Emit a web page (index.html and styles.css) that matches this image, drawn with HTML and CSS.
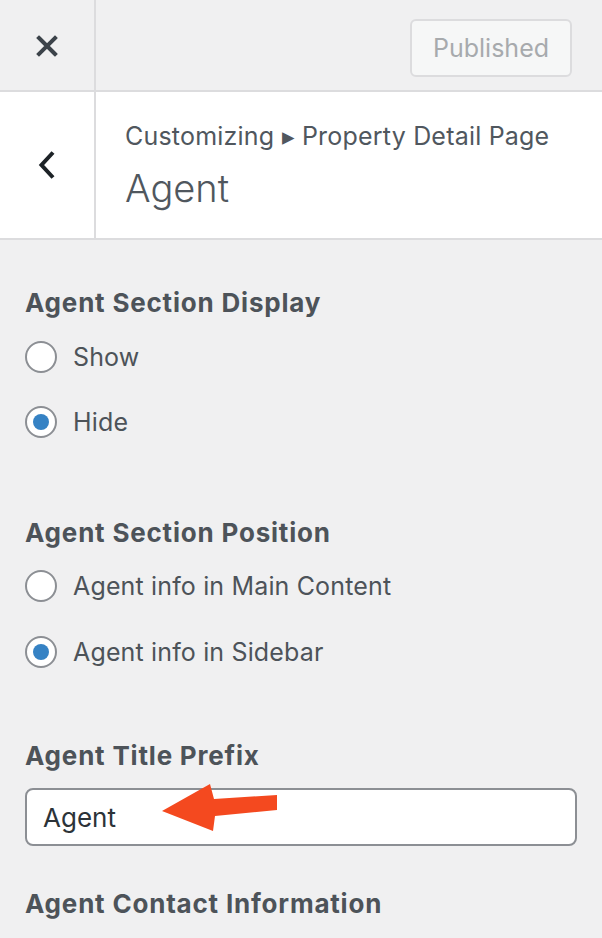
FILE: index.html
```html
<!DOCTYPE html>
<html lang="en">
  <head>
    <meta charset="UTF-8" />
    <meta name="viewport" content="width=device-width, initial-scale=1.0" />
    <title>Customizing Agent</title>
    <link rel="stylesheet" href="styles.css">
  </head>
  <body>
    <div class="topbar">
      <button class="close" aria-label="Close">
        <svg width="22" height="22" viewBox="0 0 22 22">
          <path d="M3 3 L19 19 M19 3 L3 19" stroke="#3c434a" stroke-width="4" stroke-linecap="square" fill="none" />
        </svg>
      </button>
      <button class="published" disabled>Published</button>
    </div>

    <div class="section-header">
      <button class="back" aria-label="Back">
        <svg width="18" height="30" viewBox="0 0 18 30">
          <path d="M15 2.5 L3.5 15 L15 27.5" stroke="#1d2327" stroke-width="4" fill="none" />
        </svg>
      </button>
      <div class="titles">
        <span class="crumb">Customizing &#9656; Property Detail Page</span>
        <h2>Agent</h2>
      </div>
    </div>

    <ul class="controls">
      <li class="control group-display">
        <span class="control-title">Agent Section Display</span>
        <label class="radio"><input type="radio" name="display" /> Show</label>
        <label class="radio"><input type="radio" name="display" checked /> Hide</label>
      </li>
      <li class="control group-position">
        <span class="control-title">Agent Section Position</span>
        <label class="radio"><input type="radio" name="position" /> Agent info in Main Content</label>
        <label class="radio"><input type="radio" name="position" checked /> Agent info in Sidebar</label>
      </li>
      <li class="control group-prefix">
        <span class="control-title">Agent Title Prefix</span>
        <div class="field">
          <input type="text" value="Agent" />
          <svg class="arrow" width="260" height="50" viewBox="0 0 260 50">
            <polygon points="137,23 185,-4 189,11 252,7 252,22 190,28 188,43" fill="#f4491f" />
          </svg>
        </div>
      </li>
      <li class="control group-contact">
        <span class="control-title">Agent Contact Information</span>
      </li>
    </ul>
  </body>
</html>
```

FILE: styles.css
```css
body {
  font-family: Inter, Roboto, sans-serif;
  margin: 0;
  background-color: #f0f0f1;
  color: #50575e;
}
button {
  font-family: inherit;
  background: none;
  border: none;
  padding: 0;
}
.topbar {
  display: flex;
  align-items: flex-start;
  height: 90px;
  border-bottom: 2px solid #dcdcde;
}
.close {
  box-sizing: border-box;
  width: 96px;
  height: 90px;
  border-right: 2px solid #dcdcde;
  display: flex;
  justify-content: center;
  align-items: center;
  padding-top: 2px;
}
.published {
  margin: 19px 30px 0 auto;
  width: 162px;
  height: 58px;
  border: 2px solid #dcdcde;
  border-radius: 6px;
  background-color: #f6f7f7;
  color: #a7aaad;
  font-size: 25px;
}
.section-header {
  display: flex;
  background-color: white;
  border-bottom: 2px solid #dcdcde;
  height: 146px;
}
.back {
  box-sizing: border-box;
  width: 96px;
  border-right: 2px solid #dcdcde;
  display: flex;
  justify-content: center;
  align-items: center;
}
.titles {
  padding: 29px 0 0 29px;
}
.crumb {
  display: block;
  font-size: 25px;
  line-height: 30px;
  letter-spacing: 0.2px;
}
.titles h2 {
  margin: 13px 0 0;
  font-size: 38px;
  line-height: 48px;
  font-weight: 300;
}
.controls {
  list-style: none;
  margin: 0;
  padding: 0 25px;
}
.control-title {
  display: block;
  font-size: 26px;
  line-height: 32px;
  font-weight: 700;
  letter-spacing: 0.8px;
  color: #4d5359;
}
.radio {
  display: flex;
  align-items: center;
  gap: 16px;
  height: 32px;
  font-size: 25px;
  letter-spacing: 0.15px;
  color: #4d5359;
}
.radio input {
  appearance: none;
  margin: 0;
  width: 32px;
  height: 32px;
  border: 2px solid #8c8f94;
  border-radius: 50%;
  background-color: white;
  display: flex;
  justify-content: center;
  align-items: center;
}
.radio input:checked::before {
  content: "";
  width: 16px;
  height: 16px;
  border-radius: 50%;
  background-color: #3582c4;
}
.group-display {
  padding-top: 47px;
}
.group-display .control-title {
  margin-bottom: 22px;
}
.group-display .radio + .radio {
  margin-top: 33px;
}
.group-position {
  padding-top: 79px;
}
.group-position .control-title {
  margin-bottom: 21px;
}
.group-position .radio + .radio {
  margin-top: 34px;
}
.group-prefix {
  padding-top: 72px;
}
.group-prefix .control-title {
  margin-bottom: 16px;
}
.field {
  position: relative;
}
.field input {
  display: block;
  box-sizing: border-box;
  width: 100%;
  height: 58px;
  padding: 0 16px;
  border: 2px solid #8c8f94;
  border-radius: 8px;
  background-color: white;
  font-family: inherit;
  font-size: 26px;
  color: #2c3338;
}
.arrow {
  position: absolute;
  left: 0;
  top: 0;
  overflow: visible;
}
.group-contact {
  padding-top: 42px;
}
```
